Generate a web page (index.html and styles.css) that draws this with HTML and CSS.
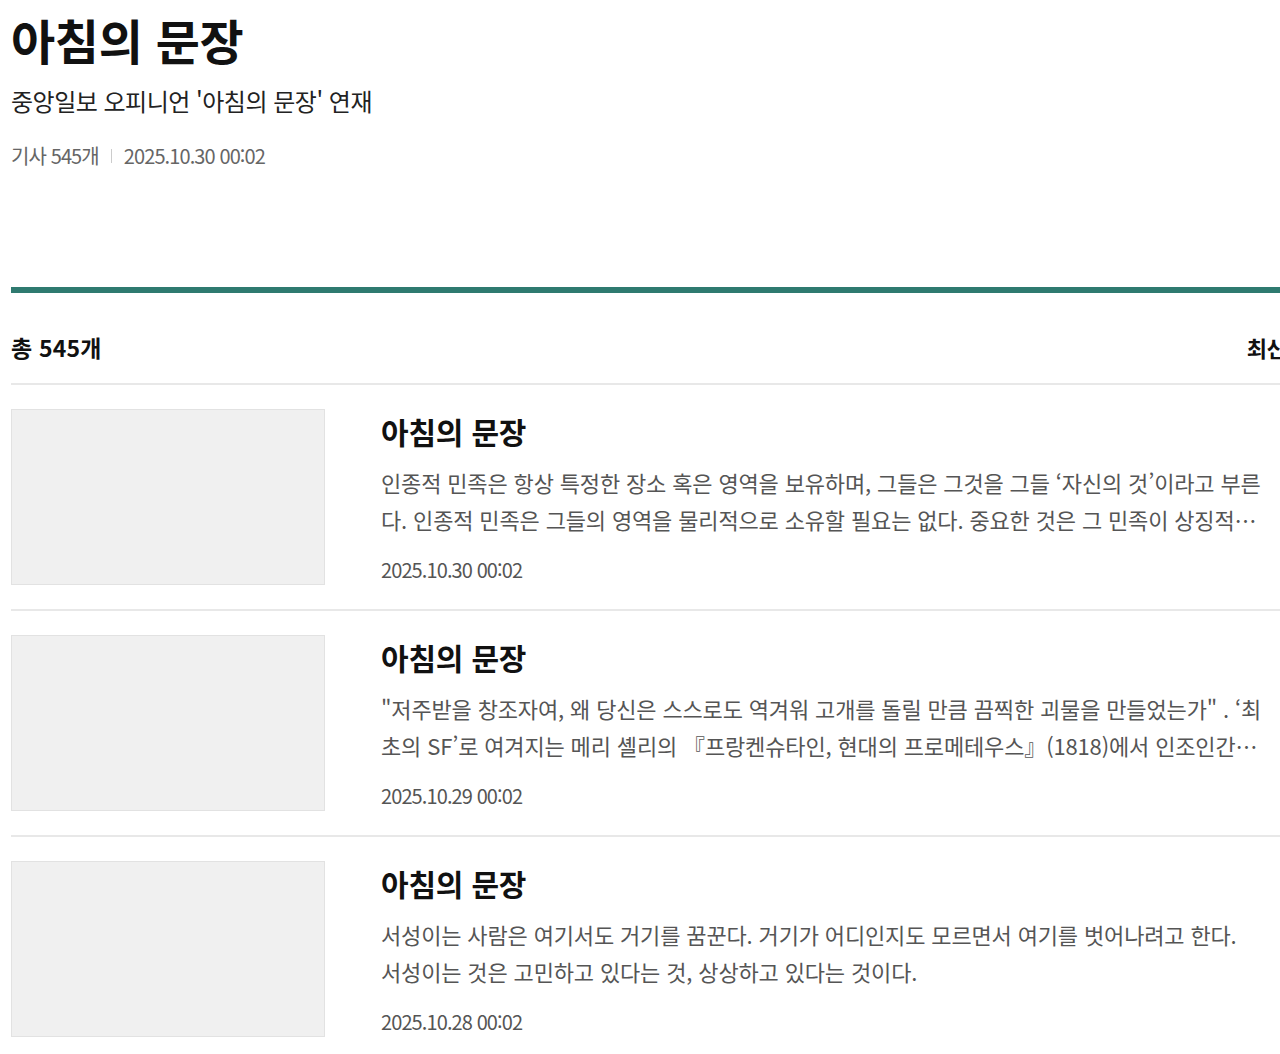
FILE: index.html
```html
<!DOCTYPE html>
<html lang="ko">
<head>
  <meta charset="UTF-8"/>
  <meta name="viewport" content="width=device-width, initial-scale=1.0"/>
  <title>아침의 문장</title>
  <link rel="stylesheet" href="styles.css">
</head>
<body>
  <div class="wrap">
    <header class="series-head">
      <h1>아침의 문장</h1>
      <p class="series-desc">중앙일보 오피니언 '아침의 문장' 연재</p>
      <div class="series-meta">
        <span>기사 545개</span>
        <span class="divider"></span>
        <span>2025.10.30 00:02</span>
      </div>
    </header>

    <section class="list-area">
      <div class="list-top">
        <strong>총 545개</strong>
        <span class="sort">최신순</span>
      </div>

      <ul class="article-list">
        <li class="article">
          <div class="thumb"></div>
          <div class="article-body">
            <h2>아침의 문장</h2>
            <p class="summary">인종적 민족은 항상 특정한 장소 혹은 영역을 보유하며, 그들은 그것을 그들 ‘자신의 것’이라고 부른다. 인종적 민족은 그들의 영역을 물리적으로 소유할 필요는 없다. 중요한 것은 그 민족이 상징적으로 그 영역을 소유하고 있다는 것이다.</p>
            <span class="date">2025.10.30 00:02</span>
          </div>
        </li>
        <li class="article">
          <div class="thumb"></div>
          <div class="article-body">
            <h2>아침의 문장</h2>
            <p class="summary">"저주받을 창조자여, 왜 당신은 스스로도 역겨워 고개를 돌릴 만큼 끔찍한 괴물을 만들었는가" . ‘최초의 SF’로 여겨지는 메리 셸리의 『프랑켄슈타인, 현대의 프로메테우스』(1818)에서 인조인간이 자신을 만든 과학자에게 던지는 말이다.</p>
            <span class="date">2025.10.29 00:02</span>
          </div>
        </li>
        <li class="article">
          <div class="thumb"></div>
          <div class="article-body">
            <h2>아침의 문장</h2>
            <p class="summary">서성이는 사람은 여기서도 거기를 꿈꾼다. 거기가 어디인지도 모르면서 여기를 벗어나려고 한다. 서성이는 것은 고민하고 있다는 것, 상상하고 있다는 것이다.</p>
            <span class="date">2025.10.28 00:02</span>
          </div>
        </li>
      </ul>
    </section>
  </div>
</body>
</html>
```

FILE: styles.css
```css
body {
  margin: 0;
  padding: 0;
  font-family: "Noto Sans CJK KR", "Noto Sans", sans-serif;
  color: #111;
  background: #fff;
  overflow-x: hidden;
}

.wrap {
  width: 1295px;
  margin-left: 11px;
}

/* series header */
.series-head {
  padding-bottom: 118px;
}

.series-head h1 {
  margin: 0;
  padding-top: 4px;
  font-size: 48px;
  line-height: 70px;
  font-weight: 700;
  letter-spacing: -0.3px;
}

.series-desc {
  margin: 10px 0 0;
  font-size: 24px;
  line-height: 34px;
  letter-spacing: -0.5px;
  color: #222;
}

.series-meta {
  display: flex;
  align-items: center;
  gap: 12px;
  margin-top: 25px;
  font-size: 20px;
  line-height: 26px;
  letter-spacing: -0.9px;
  color: #666;
}

.divider {
  width: 1px;
  height: 14px;
  background: #ccc;
}

/* list */
.list-area {
  border-top: 6px solid #2f7a70;
}

.list-top {
  display: flex;
  justify-content: space-between;
  align-items: center;
  height: 90px;
  border-bottom: 2px solid #e8e8e8;
  font-size: 23px;
  letter-spacing: 0.2px;
}

.list-top strong,
.sort {
  font-weight: 700;
  padding-top: 18px;
}

.sort {
  font-size: 22px;
  letter-spacing: -0.5px;
}

.article-list {
  margin: 0;
  padding: 0;
  list-style: none;
}

.article {
  display: flex;
  gap: 56px;
  padding: 24px 0 24px;
  border-bottom: 2px solid #e8e8e8;
}

.thumb {
  flex: none;
  width: 312px;
  height: 174px;
  background: #f0f0f0;
  border: 1px solid #e2e2e2;
}

.article-body {
  width: 881px;
}

.article-body h2 {
  margin: 1px 0 0;
  font-size: 30px;
  line-height: 42px;
  font-weight: 700;
  letter-spacing: -0.2px;
}

.summary {
  margin: 12px 0 0;
  font-size: 22px;
  line-height: 37px;
  letter-spacing: -0.15px;
  color: #555;
  word-break: break-all;
  display: -webkit-box;
  -webkit-line-clamp: 2;
  -webkit-box-orient: vertical;
  overflow: hidden;
}

.date {
  display: block;
  margin-top: 19px;
  font-size: 20px;
  line-height: 26px;
  letter-spacing: -0.9px;
  color: #555;
}
```
